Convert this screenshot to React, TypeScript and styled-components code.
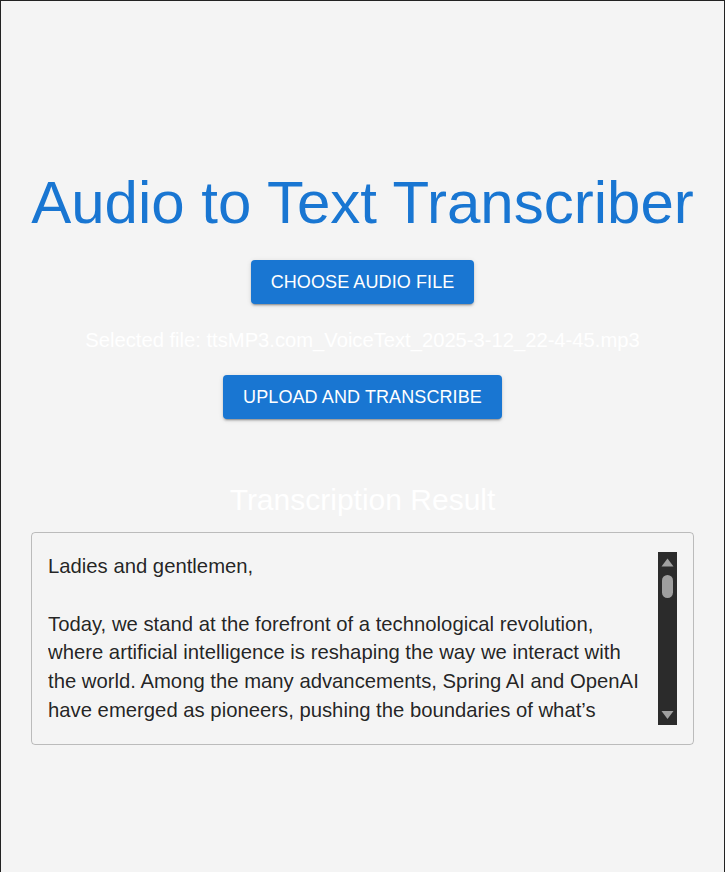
import React from "react";
import styled, { createGlobalStyle } from "styled-components";

const GlobalStyle = createGlobalStyle`
  html, body {
    margin: 0;
    padding: 0;
    height: 100%;
    overflow: hidden;
  }
  body {
    font-family: "Liberation Sans", Arial, sans-serif;
    background: #f4f4f4;
  }
  * {
    box-sizing: border-box;
  }
`;

const Page = styled.div`
  height: 100vh;
  background: #f4f4f4;
  border: 1px solid #222;
  border-bottom: none;
  padding: 166px 30px 0;
  display: flex;
  flex-direction: column;
  align-items: center;
`;

const Title = styled.h1`
  margin: 0;
  font-size: 60px;
  line-height: 72px;
  font-weight: 400;
  color: #1976d2;
  white-space: nowrap;
`;

const Button = styled.button<{ $top: number }>`
  margin-top: ${(p) => p.$top}px;
  padding: 8px 20px;
  font-family: "Liberation Sans", Arial, sans-serif;
  font-size: 18px;
  line-height: 28px;
  font-weight: 400;
  letter-spacing: 0.1px;
  text-transform: uppercase;
  color: #fff;
  background-color: #1976d2;
  border: none;
  border-radius: 4px;
  cursor: pointer;
  box-shadow: 0px 3px 1px -2px rgba(0, 0, 0, 0.2),
    0px 2px 2px 0px rgba(0, 0, 0, 0.14), 0px 1px 5px 0px rgba(0, 0, 0, 0.12);
`;

const FileName = styled.p`
  margin: 24px 0 0;
  font-size: 20.2px;
  line-height: 24px;
  color: #fff;
`;

const SectionTitle = styled.h2`
  margin: 63px 0 0;
  font-size: 30px;
  line-height: 36px;
  font-weight: 400;
  color: #fff;
`;

const ResultBox = styled.div`
  margin-top: 14px;
  width: 100%;
  display: flex;
  padding: 19px 16px;
  border: 1px solid rgba(0, 0, 0, 0.23);
  border-radius: 4px;
`;

const ResultText = styled.div`
  flex: 1;
  height: 172.5px;
  overflow: hidden;
  padding-right: 12px;
  font-size: 20.3px;
  line-height: 28.75px;
  color: rgba(0, 0, 0, 0.87);
  white-space: pre-wrap;
`;

const Scrollbar = styled.div`
  width: 19px;
  height: 172.5px;
  background: #2b2b2b;
  display: flex;
  flex-direction: column;
  align-items: center;
`;

const ArrowButton = styled.div`
  width: 19px;
  height: 19px;
  display: flex;
  svg {
    display: block;
  }
`;

const Thumb = styled.div`
  margin-top: 4px;
  width: 11px;
  height: 23px;
  border-radius: 5.5px;
  background: #9f9f9f;
`;

const Track = styled.div`
  flex: 1;
`;

const transcript = `Ladies and gentlemen,

Today, we stand at the forefront of a technological revolution, where artificial intelligence is reshaping the way we interact with the world. Among the many advancements, Spring AI and OpenAI have emerged as pioneers, pushing the boundaries of what’s`;

const App: React.FC = () => {
  return (
    <>
      <GlobalStyle />
      <Page>
        <Title>Audio to Text Transcriber</Title>
        <Button $top={21}>Choose Audio File</Button>
        <FileName>
          Selected file: ttsMP3.com_VoiceText_2025-3-12_22-4-45.mp3
        </FileName>
        <Button $top={23}>Upload and Transcribe</Button>
        <SectionTitle>Transcription Result</SectionTitle>
        <ResultBox>
          <ResultText>{transcript}</ResultText>
          <Scrollbar>
            <ArrowButton>
              <svg width="19" height="19" viewBox="0 0 19 19">
                <polygon points="3.5,14.5 9.5,6.5 15.5,14.5" fill="#a0a0a0" />
              </svg>
            </ArrowButton>
            <Thumb />
            <Track />
            <ArrowButton>
              <svg width="19" height="19" viewBox="0 0 19 19">
                <polygon points="3.5,5 9.5,13 15.5,5" fill="#a0a0a0" />
              </svg>
            </ArrowButton>
          </Scrollbar>
        </ResultBox>
      </Page>
    </>
  );
};

export default App;
